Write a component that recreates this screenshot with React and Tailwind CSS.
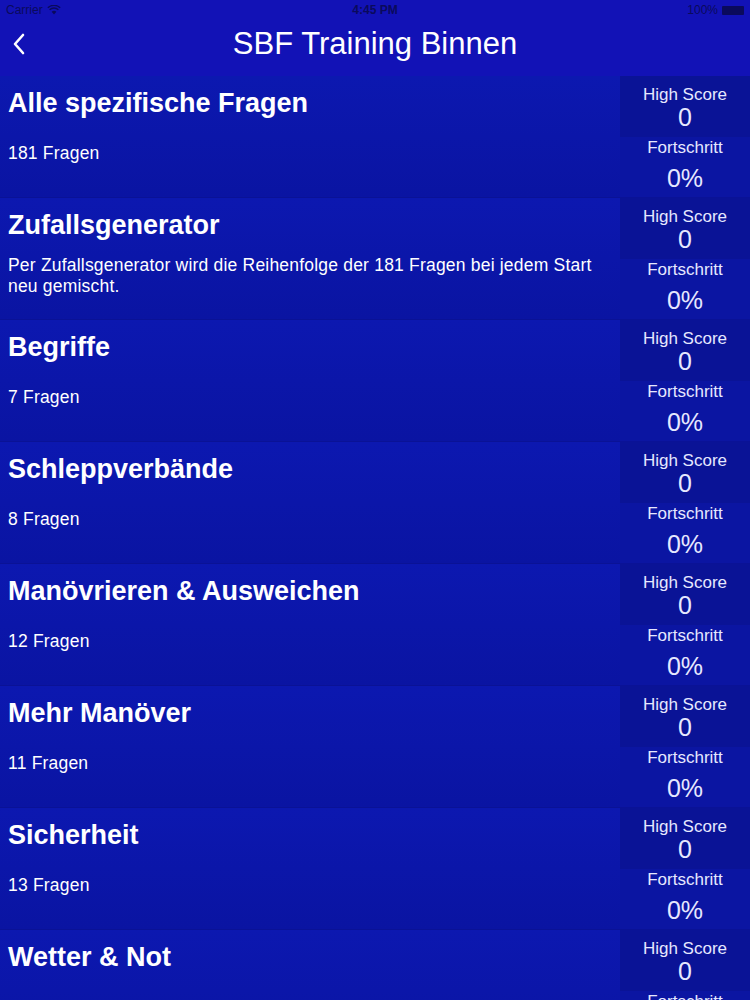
import React from 'react';

const categories = [
    { title: 'Alle spezifische Fragen', subtitle: '181 Fragen' },
    { title: 'Zufallsgenerator', subtitle: 'Per Zufallsgenerator wird die Reihenfolge der 181 Fragen bei jedem Start neu gemischt.' },
    { title: 'Begriffe', subtitle: '7 Fragen' },
    { title: 'Schleppverbände', subtitle: '8 Fragen' },
    { title: 'Manövrieren & Ausweichen', subtitle: '12 Fragen' },
    { title: 'Mehr Manöver', subtitle: '11 Fragen' },
    { title: 'Sicherheit', subtitle: '13 Fragen' },
    { title: 'Wetter & Not', subtitle: '9 Fragen' }
];

const StatusBar = () => (
    <div className="h-[20px] flex items-center justify-between px-[6px] text-[12px] text-[#0a0a5c]">
        <div className="flex items-center gap-1 w-[120px]">
            <span>Carrier</span>
            <svg width="14" height="10" viewBox="0 0 14 10">
                <path d="M7 9.5 L4.6 6.8 A3.5 3.5 0 0 1 9.4 6.8 Z" fill="#0a0a5c" />
                <path d="M2.6 4.8 A6.4 6.4 0 0 1 11.4 4.8" stroke="#0a0a5c" strokeWidth="1.4" fill="none" />
                <path d="M0.8 2.8 A9 9 0 0 1 13.2 2.8" stroke="#0a0a5c" strokeWidth="1.4" fill="none" />
            </svg>
        </div>
        <span className="font-semibold">4:45 PM</span>
        <div className="flex items-center justify-end gap-1 w-[120px]">
            <span>100%</span>
            <div className="w-[22px] h-[9px] bg-[#0a0a5c] rounded-[1px]"></div>
        </div>
    </div>
);

const CategoryRow = ({ title, subtitle }) => (
    <div className="flex h-[122px] border-b border-[#0a1296]">
        <div className="flex-1 flex flex-col px-2 pt-[12px] bg-gradient-to-b from-[#0c18b0] to-[#0a14a2]">
            <h2 className="text-[27px] leading-[30px] font-semibold text-white">{title}</h2>
            <div className="flex-1 flex items-center pb-2">
                <p className="text-[17.5px] leading-[21px] tracking-[0.2px] text-white pr-2">{subtitle}</p>
            </div>
        </div>
        <div className="w-[130px] flex flex-col text-[#e6e8ff] text-center">
            <div className="h-[61px] pt-[8px] bg-[#0a1396]">
                <p className="text-[17px] leading-[22px]">High Score</p>
                <p className="text-[25px] leading-[22px]">0</p>
            </div>
            <div className="flex-1 bg-[#0b15a2]">
                <p className="text-[17px] leading-[22px]">Fortschritt</p>
                <p className="text-[25px] leading-[28px] mt-[5px]">0%</p>
            </div>
        </div>
    </div>
);

const App = () => {
    return (
        <div className="w-[750px] h-[1000px] overflow-hidden bg-[#0a14a6] font-['Liberation_Sans',Arial,sans-serif]">
            <div className="bg-[#1212b6] h-[76px]">
                <StatusBar />
                <div className="relative h-[48px] flex items-center justify-center">
                    <svg className="absolute left-[12px] top-[13px]" width="14" height="22" viewBox="0 0 14 22">
                        <path d="M11 2 L3 11 L11 20" stroke="white" strokeWidth="2.6" fill="none" strokeLinecap="round" strokeLinejoin="round" />
                    </svg>
                    <h1 className="text-[31px] text-white">SBF Training Binnen</h1>
                </div>
            </div>
            <div>
                {categories.map((cat) => (
                    <CategoryRow key={cat.title} title={cat.title} subtitle={cat.subtitle} />
                ))}
            </div>
        </div>
    );
};

export default App;
